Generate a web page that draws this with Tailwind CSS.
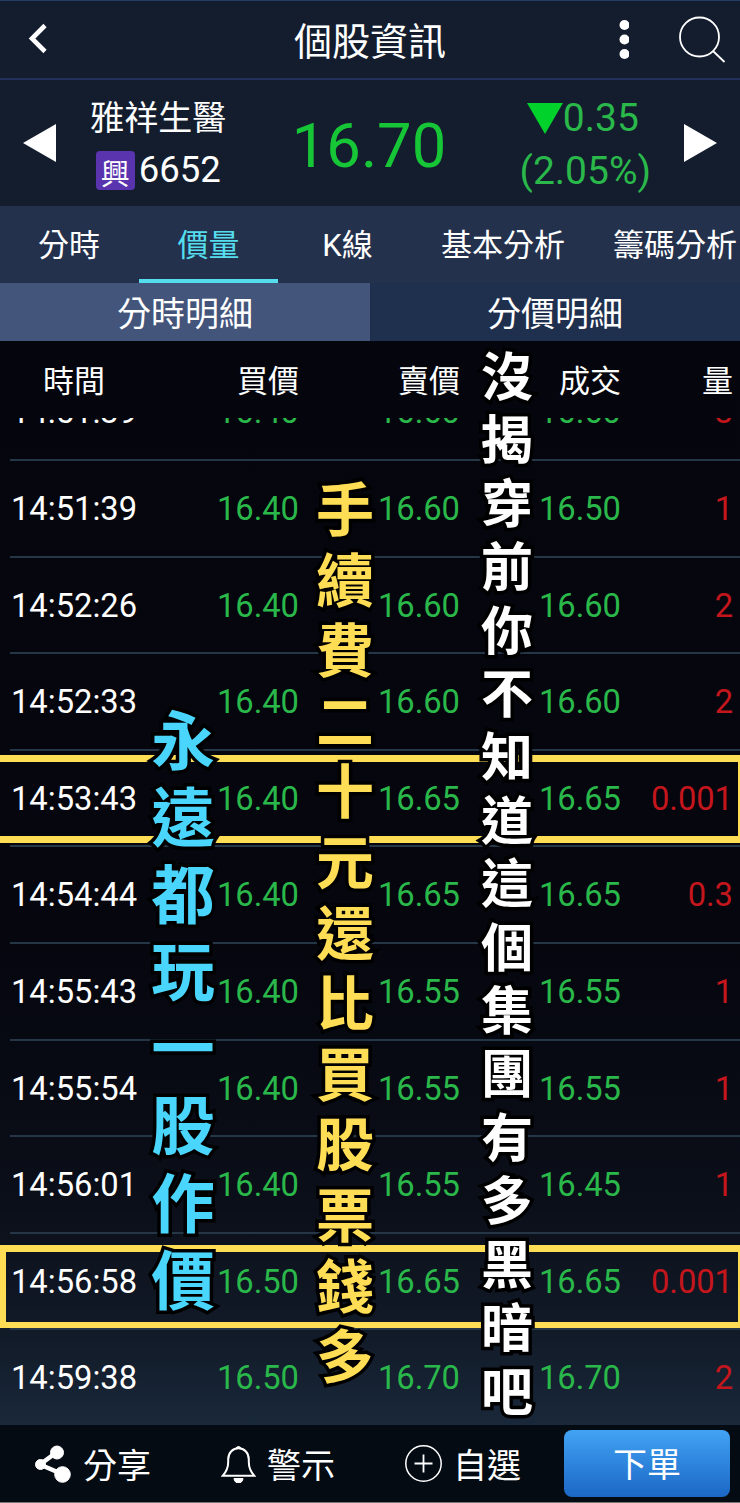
<!DOCTYPE html>
<html lang="zh-Hant">
<head>
<meta charset="utf-8">
<title>個股資訊</title>
<script src="https://cdn.jsdelivr.net/npm/@tailwindcss/browser@4"></script>
</head>
<body class="w-[740px] h-[1503px] overflow-hidden bg-[#04060d] text-white font-[Roboto,'Noto_Sans_CJK_TC',sans-serif]">
<div class="relative w-[740px] h-[1503px] flex flex-col overflow-hidden">
  <header class="h-[80px] shrink-0 bg-[#131d2e] border-t border-t-[#243b63] border-b-2 border-b-[#22305a] grid grid-cols-[240px_1fr_240px] items-center">
    <svg class="ml-7 mb-1 w-5 h-8" viewBox="0 0 20 32" fill="none" stroke="#fff" stroke-width="4.6"><path d="M17 3.500 4 16.500 17 29.500"/></svg>
    <h1 class="pt-[4px] text-[38px] leading-[56px] text-center">個股資訊</h1>
    <div class="flex items-center justify-end gap-[49px] pr-[14px]">
      <svg class="w-[10px] h-[40px]" viewBox="0 0 10 40" fill="#fff"><circle cx="5.500" cy="5" r="5"/><circle cx="5.500" cy="19.500" r="5"/><circle cx="5.500" cy="34" r="5"/></svg>
      <svg class="w-[48px] h-[48px]" viewBox="0 0 48 48" fill="none" stroke="#fff" stroke-width="1.8"><circle cx="21.500" cy="21" r="19.500"/><path d="M35 35 46.500 46"/></svg>
    </div>
  </header>

  <section class="h-[126px] shrink-0 bg-[#131d2e] flex items-center">
    <svg class="ml-[23px] w-[33px] h-[38px] shrink-0" viewBox="0 0 33 38" fill="#fff"><path d="M0 19 33 0V38Z"/></svg>
    <div class="w-[204px] pl-[3px] pt-[2px] flex flex-col items-center">
      <div class="text-[34px] leading-[52px]">雅祥生醫</div>
      <div class="flex items-center gap-1 h-[52px]">
        <span class="w-[39px] h-[39px] rounded bg-[#5934ae] text-[29px] leading-[48px] text-center overflow-hidden">興</span>
        <span class="text-[36.500px] leading-[52px]">6652</span>
      </div>
    </div>
    <div class="w-[220px] pl-[6px] pt-[5px] text-center text-[61.500px] leading-[72px] text-[#16c637]">16.70</div>
    <div class="w-[212px] pl-[7px] pt-[3px] flex flex-col items-center text-[39px] leading-[53px] text-[#2ab84b]">
      <div class="flex items-center"><svg class="w-9 h-[31px]" viewBox="0 0 36 31" fill="#00d12b"><path d="M0 0H36L18 31Z"/></svg>0.35</div>
      <div class="pl-[5px]">(2.05%)</div>
    </div>
    <svg class="ml-auto mr-[23px] w-[33px] h-[38px] shrink-0" viewBox="0 0 33 38" fill="#fff"><path d="M33 19 0 0V38Z"/></svg>
  </section>

  <nav class="h-[77px] shrink-0 bg-[#23314d] flex text-[31px] leading-[80px] text-center whitespace-nowrap">
    <div class="w-[138px] shrink-0">分時</div>
    <div class="w-[139px] ml-px shrink-0 border-b-4 border-[#55ddee] text-[#55ddee]">價量</div>
    <div class="w-[139px] shrink-0">K線</div>
    <div class="w-[172px] shrink-0">基本分析</div>
    <div class="w-[172px] shrink-0">籌碼分析</div>
  </nav>

  <div class="h-[58px] shrink-0 grid grid-cols-2 text-center text-[34px] leading-[62px]">
    <div class="h-[58px] bg-[#43557b]">分時明細</div>
    <div class="h-[58px] bg-[#1f2f4e]">分價明細</div>
  </div>

  <main class="h-[1084px] shrink-0 overflow-hidden bg-[linear-gradient(180deg,#05060d_0%,#05060e_55%,#0b0f19_80%,#121b29_92%,#19283a_100%)]">
    <div class="h-[77px] grid grid-cols-[148px_151px_161px_161px_112px] text-[31px] leading-[81px] text-right">
      <div class="text-center">時間</div><div>買價</div><div>賣價</div><div>成交</div><div>量</div>
    </div>
    <div class="h-[1007px] overflow-hidden flex flex-col justify-end">
      <div id="rows" class="shrink-0 mb-[-2px]"></div>
    </div>
  </main>

  <footer class="h-[78px] shrink-0 bg-[#050b12] border-b border-[#777] flex items-center text-[34px] leading-[76px]">
    <div class="w-[185px] pl-[34px] flex items-center gap-[11px]">
      <svg class="w-[38px] h-[38px]" viewBox="0 0 38 38" fill="#fff" stroke="#fff"><path d="M23 7 6 19.500 28 29" fill="none" stroke-width="4.500"/><circle cx="23" cy="7.500" r="6.500"/><circle cx="6.500" cy="19.500" r="5"/><circle cx="28.500" cy="29.500" r="7.800"/></svg><span class="pt-[4px]">分享</span>
    </div>
    <div class="w-[185px] pl-[36px] flex items-center gap-[11px]">
      <svg class="w-[35px] h-[38px]" viewBox="0 0 35 38" fill="none" stroke="#fff" stroke-width="2"><path d="M1.800 30.700C5.500 26.500 7.200 23.500 7.200 17V14.500C7.200 7.500 12 3.300 17.500 3.300S27.800 7.500 27.800 14.500V17C27.800 23.500 29.500 26.500 33.200 30.700Z"/><path d="M14.700 3.500A3 3 0 0 1 20.300 3.500ZM13 33.500H22A4.500 4.500 0 0 1 13 33.500Z" fill="#fff" stroke-width="1"/></svg><span class="pt-[4px]">警示</span>
    </div>
    <div class="w-[194px] pl-[35px] flex items-center gap-[11px]">
      <svg class="w-[37px] h-[37px]" viewBox="0 0 37 37" fill="none" stroke="#fff" stroke-width="1.500"><circle cx="18.500" cy="18.500" r="17.700"/><path d="M9.500 18.500H27.500M18.500 9.500V27.500" stroke-width="1.800"/></svg><span class="pt-[4px]">自選</span>
    </div>
    <button class="w-[166px] h-[67px] rounded-lg bg-linear-to-b from-[#42a3f4] to-[#1b67c5] text-[34px] leading-[71px]">下單</button>
  </footer>

  <div class="absolute left-0 top-[755px] w-[740px] h-[88px] border-[7px] border-l-0 border-r-2 border-[#ffdd55]"></div>
  <div class="absolute left-0 top-[1245px] w-[740px] h-[83px] border-[6px] border-t-[7px] border-r-2 border-[#ffdd55]"></div>

  <div data-text="永遠都玩一股作價" class="banner absolute left-[143px] top-[704px] w-20 flex flex-col items-center text-[63.500px] leading-[77.100px] text-[#4ad6fc] font-bold [-webkit-text-stroke:7px_#000] [paint-order:stroke_fill]"></div>
  <div data-text="手續費二十元還比買股票錢多" class="banner absolute left-[305px] top-[476px] w-20 flex flex-col items-center text-[58px] leading-[70.600px] text-[#ffdd55] font-bold [-webkit-text-stroke:7px_#000] [paint-order:stroke_fill]"></div>
  <div data-text="沒揭穿前你不知道這個集團有多黑暗吧" class="banner absolute left-[467px] top-[347px] w-20 flex flex-col items-center text-[52px] leading-[63.400px] text-white font-bold [-webkit-text-stroke:7px_#000] [paint-order:stroke_fill]"></div>
</div>
<script>
  const trades = [
    ['14:51:39', '16.40', '16.60', '16.60', '3'],
    ['14:51:39', '16.40', '16.60', '16.50', '1'],
    ['14:52:26', '16.40', '16.60', '16.60', '2'],
    ['14:52:33', '16.40', '16.60', '16.60', '2'],
    ['14:53:43', '16.40', '16.65', '16.65', '0.001'],
    ['14:54:44', '16.40', '16.65', '16.65', '0.3'],
    ['14:55:43', '16.40', '16.55', '16.55', '1'],
    ['14:55:54', '16.40', '16.55', '16.55', '1'],
    ['14:56:01', '16.40', '16.55', '16.45', '1'],
    ['14:56:58', '16.50', '16.65', '16.65', '0.001'],
    ['14:59:38', '16.50', '16.70', '16.70', '2'],
  ];
  document.getElementById('rows').innerHTML = trades.map(([time, ...v]) => `
    <div class="ml-[10px] h-[96.600px] border-b-2 border-[#253747] grid grid-cols-[138px_151px_161px_161px_112px] text-[32.700px] leading-[97px] text-right text-[#2ab84b]">
      <div class="text-left text-white pl-px">${time}</div><div>${v[0]}</div><div>${v[1]}</div><div>${v[2]}</div><div class="text-[#c4161c]">${v[3]}</div>
    </div>`).join('');
  document.querySelectorAll('.banner').forEach(el => {
    el.innerHTML = [...el.dataset.text].map(c => `<span>${c}</span>`).join('');
  });
</script>
</body>
</html>
